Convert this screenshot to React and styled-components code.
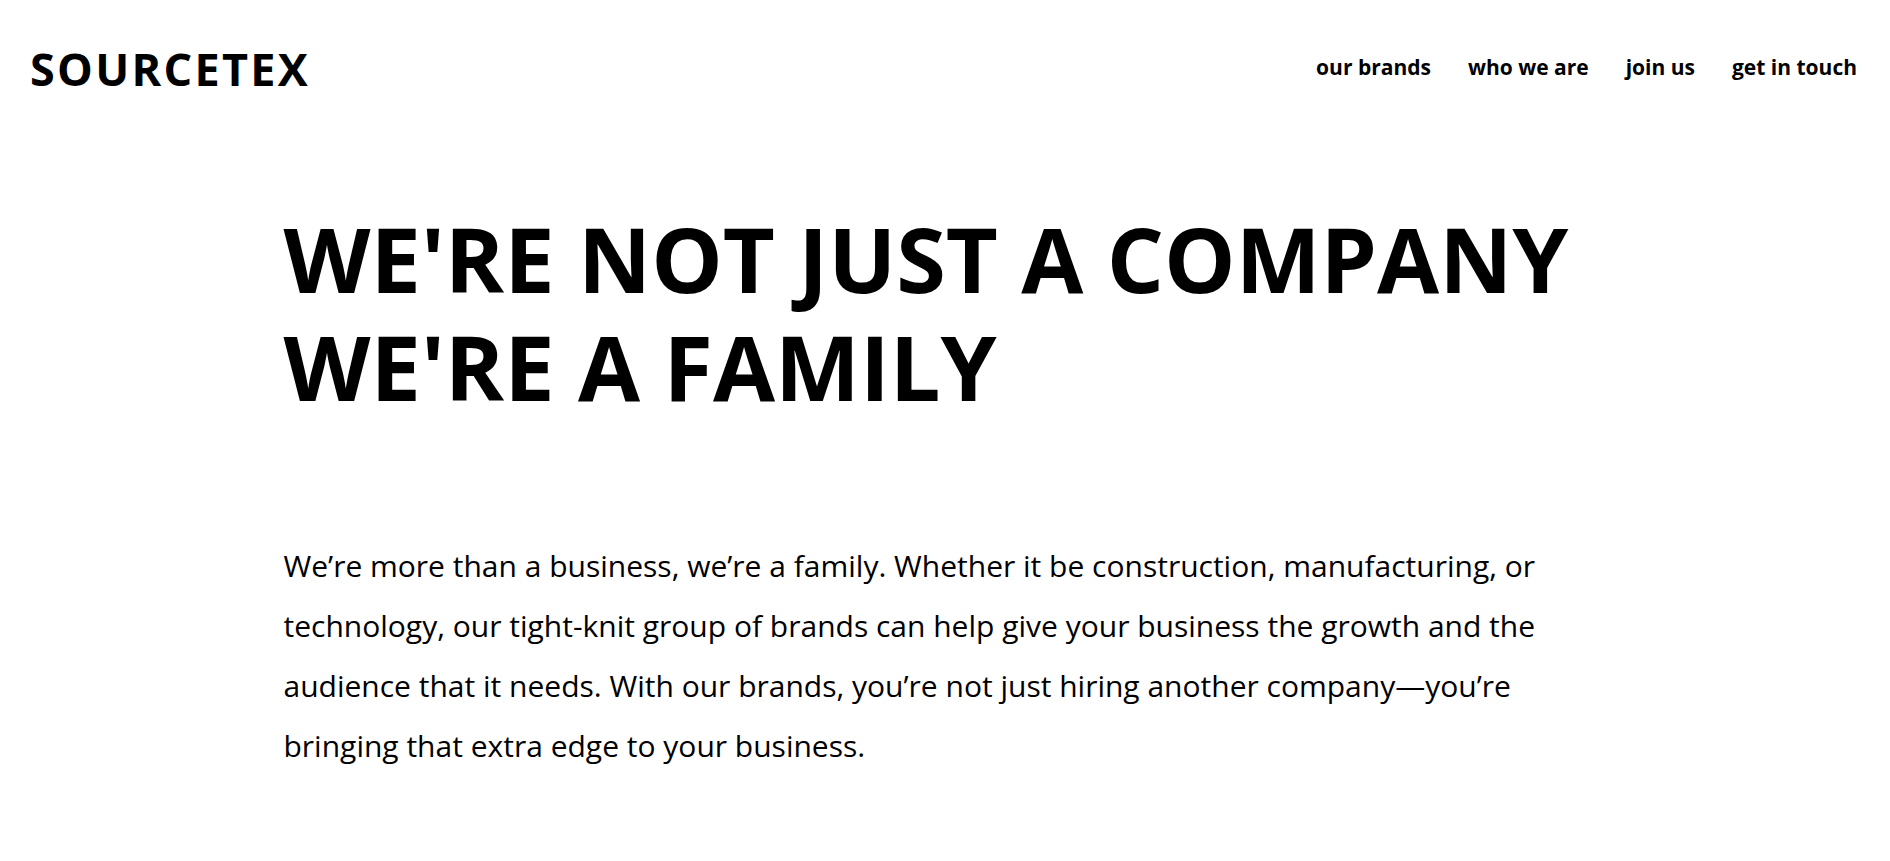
import React from "react";
import styled, { createGlobalStyle } from "styled-components";

const Global = createGlobalStyle`
  html, body { margin: 0; padding: 0; background: #fff; }
  body { font-family: "Open Sans", "Liberation Sans", sans-serif; color: #000; }
  * { box-sizing: border-box; }
`;

const Header = styled.header`
  display: flex;
  justify-content: space-between;
  align-items: center;
  height: 137px;
  padding: 0 33px 0 30px;
`;

const Logo = styled.a`
  font-size: 45px;
  font-weight: 700;
  letter-spacing: 2.3px;
  line-height: 1;
  color: #000;
  text-decoration: none;
`;

const Nav = styled.nav`
  display: flex;
  align-items: center;
  gap: 37px;
  margin-top: -2px;
`;

const NavLink = styled.a`
  font-size: 21px;
  font-weight: 700;
  color: #000;
  text-decoration: none;
  line-height: 1;
`;

const Main = styled.main`
  padding: 67px 15% 0;
`;

const Heading = styled.h1`
  margin: 0;
  font-size: 90px;
  line-height: 108px;
  font-weight: 700;
  text-transform: uppercase;
`;

const Lead = styled.p`
  margin: 116px 0 0;
  font-size: 30px;
  line-height: 60px;
  font-weight: 400;
`;

export default function App() {
  const links = ["our brands", "who we are", "join us", "get in touch"];
  return (
    <>
      <Global />
      <Header>
        <Logo href="#">SOURCETEX</Logo>
        <Nav>
          {links.map((l) => (
            <NavLink key={l} href="#">{l}</NavLink>
          ))}
        </Nav>
      </Header>
      <Main>
        <Heading>
          WE'RE NOT JUST A COMPANY
          <br />
          WE'RE A FAMILY
        </Heading>
        <Lead>
          We’re more than a business, we’re a family. Whether it be construction, manufacturing, or technology, our tight-knit group of brands can help give your business the growth and the audience that it needs. With our brands, you’re not just hiring another company—you’re bringing that extra edge to your business.
        </Lead>
      </Main>
    </>
  );
}
